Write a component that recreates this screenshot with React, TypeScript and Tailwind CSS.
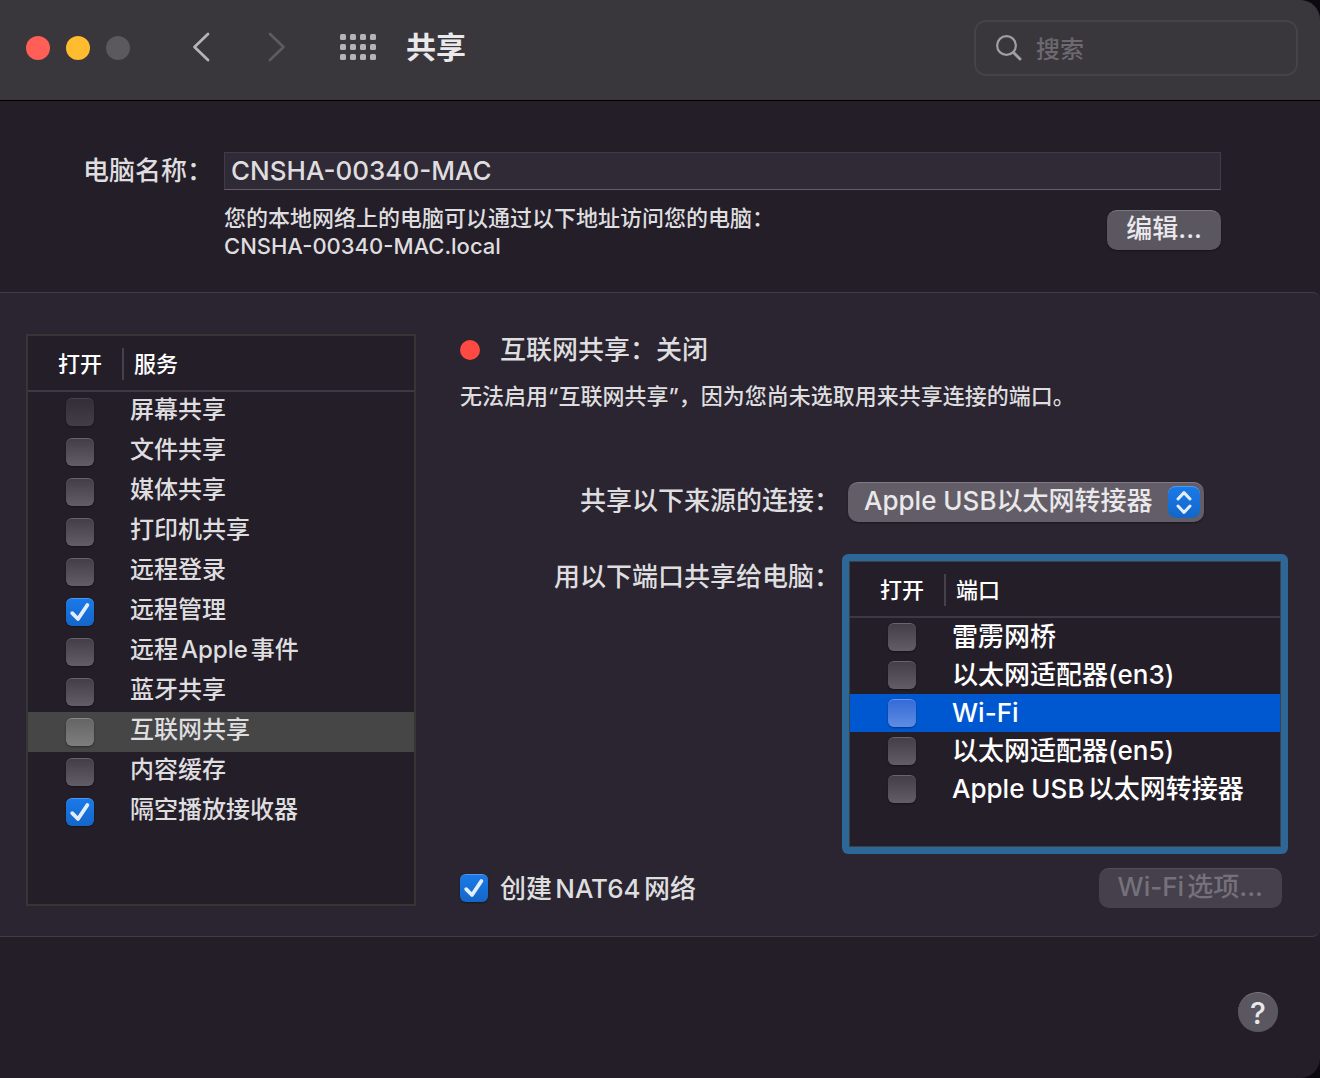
import { useState } from "react";
import clsx from "clsx";

type Item = {
  name: string;
  on?: boolean;
  disabled?: boolean;
};

const services: Item[] = [
  { name: "屏幕共享", disabled: true },
  { name: "文件共享" },
  { name: "媒体共享" },
  { name: "打印机共享" },
  { name: "远程登录" },
  { name: "远程管理", on: true },
  { name: "远程Apple事件" },
  { name: "蓝牙共享" },
  { name: "互联网共享" },
  { name: "内容缓存" },
  { name: "隔空播放接收器", on: true },
];

const ports: Item[] = [
  { name: "雷雳网桥" },
  { name: "以太网适配器(en3)" },
  { name: "Wi-Fi" },
  { name: "以太网适配器(en5)" },
  { name: "Apple USB以太网转接器" },
];

const boxTone = {
  plain: "from-[#443e49] to-[#635d68] border-t-[#69646e]",
  gray: "from-[#656565] to-[#7e7e7e] border-t-[#8a8a8a]",
  blue: "from-[#356bd8] to-[#5f8ce3] border-t-[#6e97e6]",
};

function Checkbox({
  id,
  on = false,
  disabled = false,
  tone = "plain",
}: {
  id: string;
  on?: boolean;
  disabled?: boolean;
  tone?: keyof typeof boxTone;
}) {
  const [checked, setChecked] = useState(on);

  return (
    <span className="grid size-7 shrink-0">
      <input
        id={id}
        type="checkbox"
        checked={checked}
        disabled={disabled}
        onChange={() => setChecked(!checked)}
        className={clsx(
          "col-start-1 row-start-1 size-7 appearance-none rounded-md border-t bg-linear-to-b shadow-[0_1px_2px_rgba(0,0,0,0.4)] disabled:opacity-50",
          checked ? "border-t-[#4d9bf0] from-[#1a7ae8] to-[#1466c8]" : boxTone[tone]
        )}
      />
      {checked && (
        <svg
          viewBox="0 0 28 28"
          className="pointer-events-none col-start-1 row-start-1 size-7"
          fill="none"
          stroke="#e4edfb"
          strokeWidth="3.8"
          strokeLinecap="round"
          strokeLinejoin="round"
        >
          <path d="M6.2 15.2 12 21 21.4 7" />
        </svg>
      )}
    </span>
  );
}

function CheckTable({
  id,
  heading,
  items,
  selected,
  large = false,
}: {
  id: string;
  heading: string;
  items: Item[];
  selected: string;
  large?: boolean;
}) {
  return (
    <table className="w-full table-fixed border-separate border-spacing-0 text-left">
      <thead>
        <tr className="h-14 text-[22px] leading-8 text-white">
          <th scope="col" className="w-24 border-b-2 border-[#3d3843] p-0 pt-0.5 font-medium">
            <div className="border-r-2 border-[#46414c] pl-[30px]">打开</div>
          </th>
          <th scope="col" className="border-b-2 border-[#3d3843] p-0 pt-0.5 pl-2.5 font-medium">
            {heading}
          </th>
        </tr>
      </thead>
      <tbody className={large ? "text-[26px] text-white" : "text-2xl text-[#dedddf]"}>
        {items.map((item, i) => {
          const active = item.name === selected;
          return (
            <tr
              key={item.name}
              className={clsx(
                large ? "h-[38px]" : "h-10",
                active && (large ? "bg-[#0058d0]" : "bg-[#464646]")
              )}
            >
              <td className="p-0 pl-[38px]">
                <Checkbox
                  id={`${id}-${i}`}
                  on={item.on}
                  disabled={item.disabled}
                  tone={active ? (large ? "blue" : "gray") : "plain"}
                />
              </td>
              <td className={clsx("p-0 pl-1.5", !large && "pb-1")}>
                <label htmlFor={`${id}-${i}`} className="block truncate leading-9">
                  {item.name}
                </label>
              </td>
            </tr>
          );
        })}
      </tbody>
    </table>
  );
}

function Toolbar() {
  return (
    <header className="flex h-[101px] items-center border-b border-black bg-[#39363c] pr-[22px] pb-1 pl-[26px]">
      <div className="flex gap-4">
        <button aria-label="关闭窗口" className="size-6 rounded-full bg-[#ff5f57]" />
        <button aria-label="最小化" className="size-6 rounded-full bg-[#febc2e]" />
        <button aria-label="缩放" disabled className="size-6 rounded-full bg-[#5b585e]" />
      </div>
      <nav className="ml-[61px] flex items-center pb-0.5">
        <button aria-label="后退" className="text-[#b5b2b8]">
          <svg viewBox="0 0 20 30" className="h-[30px] w-5" fill="none" stroke="currentColor" strokeWidth="2.8" strokeLinecap="round" strokeLinejoin="round">
            <path d="M17 2 3.5 15 17 28" />
          </svg>
        </button>
        <button aria-label="前进" disabled className="ml-14 text-[#5d5a60]">
          <svg viewBox="0 0 20 30" className="h-[30px] w-5" fill="none" stroke="currentColor" strokeWidth="2.8" strokeLinecap="round" strokeLinejoin="round">
            <path d="M3 2 16.5 15 3 28" />
          </svg>
        </button>
        <button aria-label="显示全部" className="ml-[53px] text-[#b5b2b8]">
          <svg viewBox="0 0 36 26" className="h-[26px] w-9" fill="currentColor">
            {[0, 10, 20].map((y) =>
              [0, 10, 20, 30].map((x) => (
                <rect key={`${x}-${y}`} x={x} y={y} width="6" height="6" rx="1.5" />
              ))
            )}
          </svg>
        </button>
        <h1 className="ml-[30px] text-3xl font-bold text-[#e9e8ea]">共享</h1>
      </nav>
      <label className="ml-auto flex h-14 w-[324px] items-center rounded-xl border-2 border-[#454248] pl-5">
        <svg viewBox="0 0 26 26" className="size-[26px] shrink-0" fill="none" stroke="#a19ea4" strokeLinecap="round">
          <circle cx="10.5" cy="10.5" r="9.4" strokeWidth="2.2" />
          <path d="M17.5 17.5 24 24" strokeWidth="3" />
        </svg>
        <input
          type="search"
          aria-label="搜索"
          placeholder="搜索"
          className="ml-3.5 w-full min-w-0 bg-transparent pt-1 text-2xl outline-none placeholder:text-[#6c696f]"
        />
      </label>
    </header>
  );
}

function ComputerName() {
  return (
    <section className="flex pt-[51px] pr-[99px] pb-8 pl-[83px]">
      <label htmlFor="computer-name" className="w-[141px] shrink-0 text-[26px] leading-[38px]">
        电脑名称：
      </label>
      <div className="min-w-0 flex-1">
        <input
          id="computer-name"
          defaultValue="CNSHA-00340-MAC"
          className="block h-[38px] w-full border border-[#403b46] border-b-[#625e68] bg-[#302a36] px-1.5 pb-0.5 text-[26px] outline-none"
        />
        <div className="mt-3.5 flex items-start justify-between text-[22px] leading-7">
          <p>
            您的本地网络上的电脑可以通过以下地址访问您的电脑：
            <br />
            CNSHA-00340-MAC.local
          </p>
          <button className="mt-1.5 h-10 shrink-0 rounded-[10px] border-t border-[#7b7781] bg-[#5b5761] px-[19px] pb-1 text-[26px] leading-9 text-[#e9e8ea] shadow-[0_1px_2px_rgba(0,0,0,0.4)]">
            编辑...
          </button>
        </div>
      </div>
    </section>
  );
}

function InternetSharing() {
  return (
    <section className="min-w-0 flex-1">
      <h2 className="flex items-center gap-5 text-[26px] leading-8">
        <span className="size-5 rounded-full bg-[#ff4a43]" />
        互联网共享：关闭
      </h2>
      <p className="mt-4 text-[22px] leading-7">
        无法启用“互联网共享”，因为您尚未选取用来共享连接的端口。
      </p>

      <div className="mt-[72px] grid grid-cols-[380px_1fr] gap-x-2 gap-y-[38px] text-[26px]">
        <label htmlFor="source" className="text-right leading-[38px]">
          共享以下来源的连接：
        </label>
        <div className="grid w-[356px] grid-rows-[40px]">
          <select
            id="source"
            className="col-start-1 row-start-1 h-10 appearance-none rounded-[10px] border-t border-[#7f7a84] bg-[#635d67] pb-1 pl-4 leading-9 text-[#e9e8ea] shadow-[0_1px_2px_rgba(0,0,0,0.4)] outline-none"
          >
            <option>Apple USB以太网转接器</option>
            <option>Wi-Fi</option>
          </select>
          <span className="pointer-events-none col-start-1 row-start-1 mr-1 size-8 self-center justify-self-end rounded-lg border-t border-[#4d9bf0] bg-linear-to-b from-[#1a7ae8] to-[#1466c8]">
            <svg viewBox="0 0 32 32" fill="none" stroke="#e4edfb" strokeWidth="3" strokeLinecap="round" strokeLinejoin="round">
              <path d="M10 12 16 5.6 22 12M10 19 16 25.4 22 19" />
            </svg>
          </span>
        </div>

        <span className="text-right leading-[34px]">用以下端口共享给电脑：</span>
        <div className="min-h-[288px] rounded-xs border-2 border-[#2c6798] bg-[#241e29] ring-6 ring-[#2c6798]">
          <div className="min-h-[284px] outline-1 outline-[#3f4041]">
            <CheckTable id="port" heading="端口" items={ports} selected="Wi-Fi" large />
          </div>
        </div>
      </div>

      <div className="mt-5 flex h-10 items-center justify-between text-[26px]">
        <div className="flex items-center gap-3">
          <Checkbox id="nat64" on />
          <label htmlFor="nat64">创建NAT64网络</label>
        </div>
        <button
          disabled
          className="h-10 rounded-[10px] border-t border-[#534e59] bg-[#45404b] px-[19px] pb-1 leading-9 text-[#75717a]"
        >
          Wi-Fi选项...
        </button>
      </div>
    </section>
  );
}

export default function App() {
  return (
    <div className="bg-[#0c0a10]">
      <main className="flex min-h-screen flex-col overflow-hidden rounded-r-[20px] bg-[#241e29] font-['Inter','Noto_Sans_CJK_SC',sans-serif] font-medium text-[#dedddf] [text-autospace:normal]">
        <Toolbar />
        <ComputerName />
        <div className="flex gap-11 rounded-r-lg border-y border-[#423c48] bg-[#2a2530] pt-[41px] pr-[38px] pb-7 pl-[26px]">
          <div className="mb-0.5 w-[390px] shrink-0 border-2 border-[#363635] bg-[#241e29]">
            <CheckTable id="service" heading="服务" items={services} selected="互联网共享" />
          </div>
          <InternetSharing />
        </div>
        <footer className="flex flex-1 items-start justify-end pt-[55px] pr-[42px]">
          <button
            aria-label="帮助"
            className="size-10 rounded-full border-t border-[#7b7781] bg-[#5b5761] text-3xl leading-9 text-[#e9e8ea]"
          >
            ?
          </button>
        </footer>
      </main>
    </div>
  );
}
